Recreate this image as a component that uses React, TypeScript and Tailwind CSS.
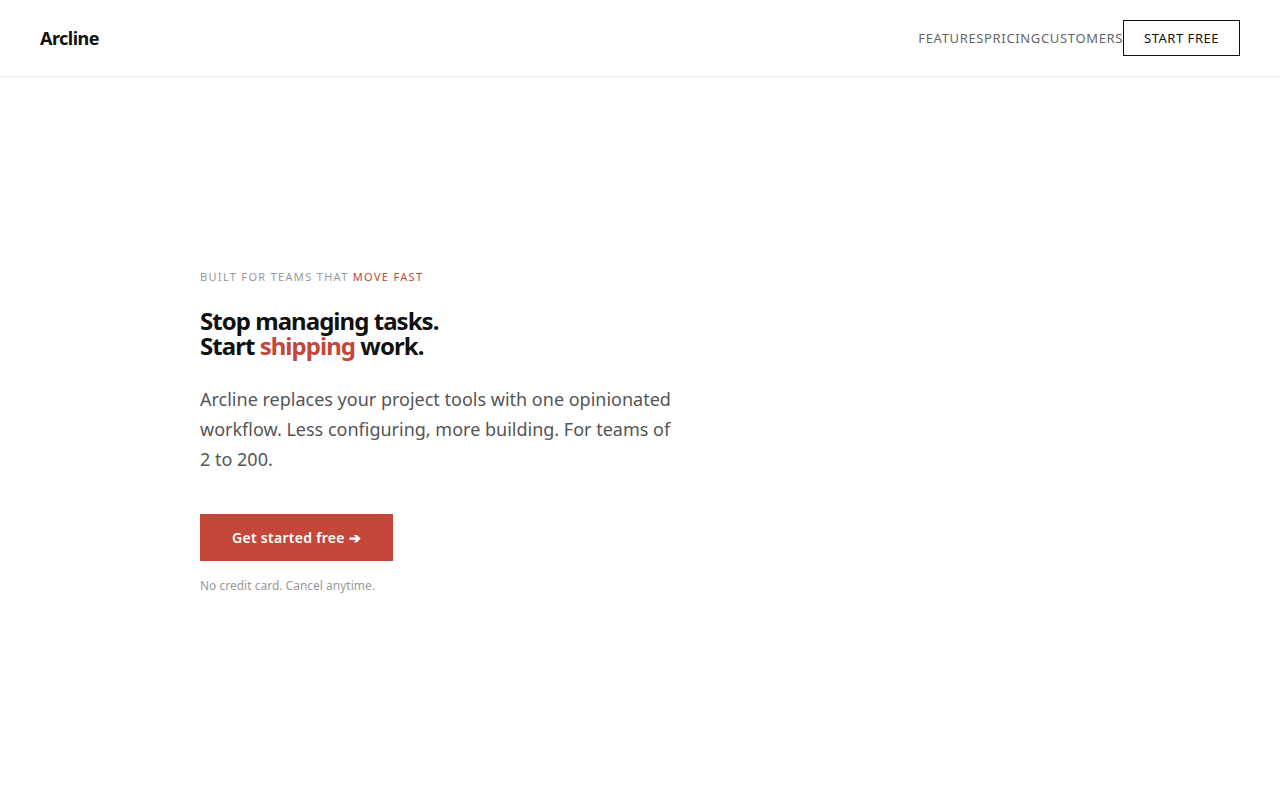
export default function App() {
  return (
    <div className="min-h-screen bg-white text-[#111] font-['Noto_Sans',sans-serif]">
      <header className="h-[77px] border-b border-[#eeeeee] px-10 flex items-center justify-between">
        <div className="text-[18px] font-bold tracking-[-0.03em]">Arcline</div>
        <nav className="flex items-center">
          <a className="pt-[2px] text-[13px] text-[#666] tracking-[0.05em]">FEATURES</a>
          <a className="pt-[2px] text-[13px] text-[#666] tracking-[0.05em]">PRICING</a>
          <a className="pt-[2px] text-[13px] text-[#666] tracking-[0.05em]">CUSTOMERS</a>
          <button className="h-9 pt-[2px] px-5 border border-[#111] text-[13px] tracking-[0.04em] text-[#111]">
            START FREE
          </button>
        </nav>
      </header>
      <main className="h-[723px] flex items-center px-[200px] pb-[13px]">
        <div className="max-w-[480px]">
          <p className="text-[11px] tracking-[0.12em] text-[#999]">
            BUILT FOR TEAMS THAT <span className="text-[#c4473a]">MOVE FAST</span>
          </p>
          <h1 className="mt-[23px] text-[24px] font-bold leading-[25px] tracking-[-0.04em]">
            Stop managing tasks.
            <br />
            Start <span className="text-[#c4473a]">shipping</span> work.
          </h1>
          <p className="mt-[26px] text-[18px] leading-[30px] text-[#555]">
            Arcline replaces your project tools with one opinionated workflow. Less configuring, more building. For teams of 2 to 200.
          </p>
          <button className="mt-10 h-[47px] px-8 bg-[#c4473a] text-white text-[14px] tracking-[0.02em] font-semibold">
            Get started free ➔
          </button>
          <p className="mt-4 text-[12px] text-[#999]">No credit card. Cancel anytime.</p>
        </div>
      </main>
    </div>
  );
}
